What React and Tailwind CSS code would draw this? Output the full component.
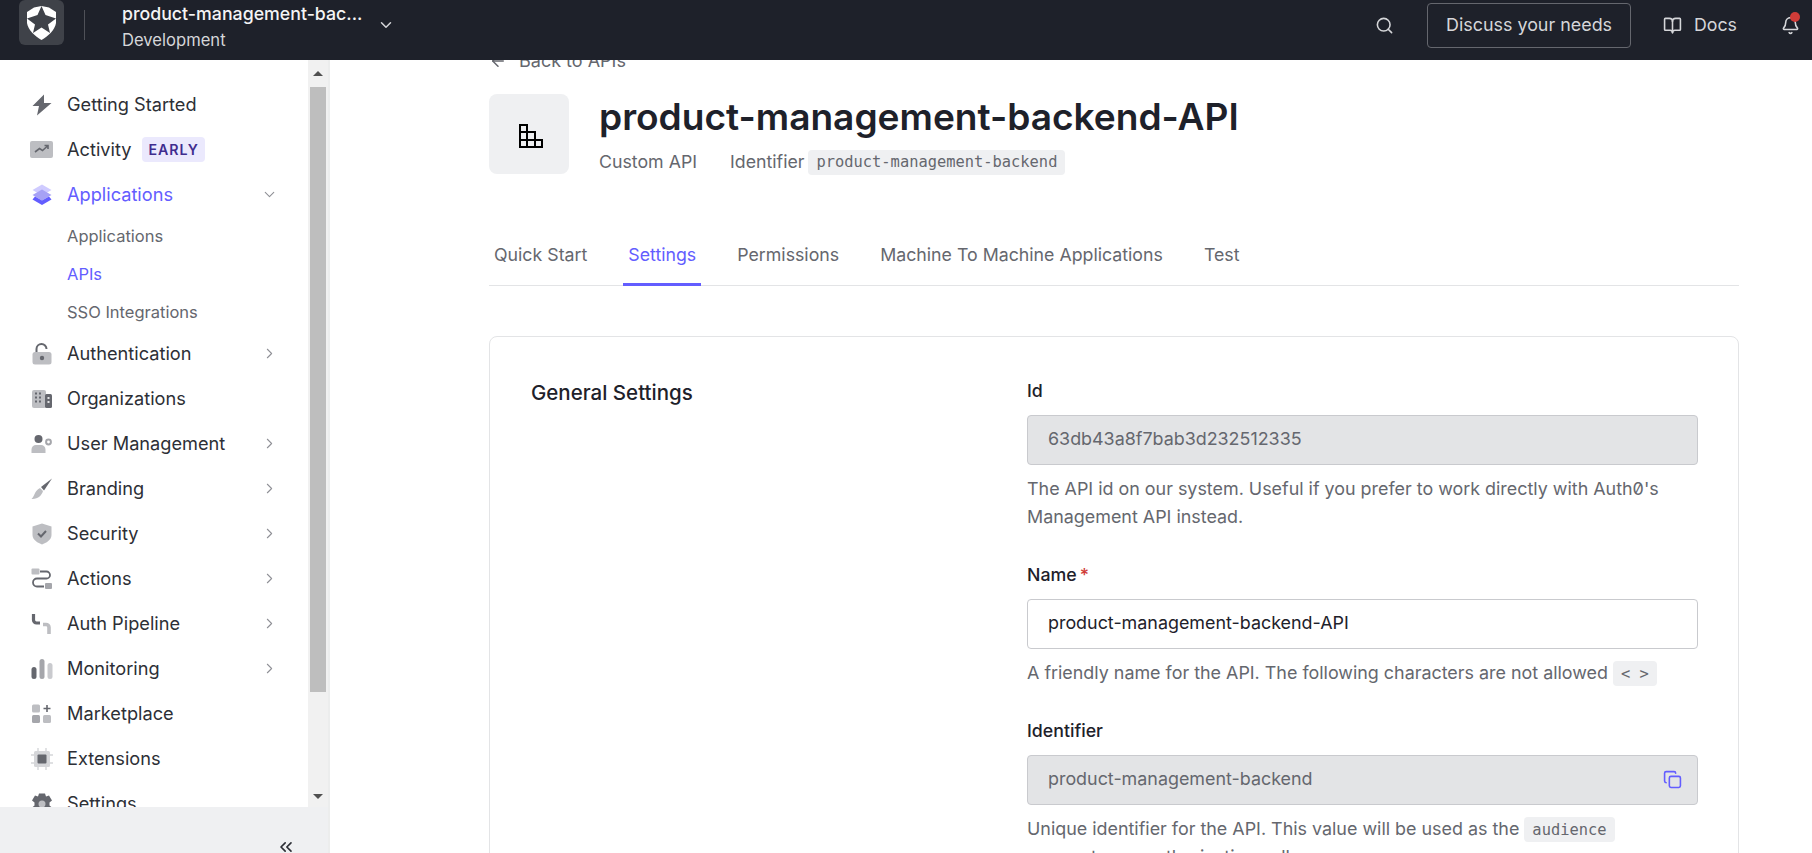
import React from 'react';
import { ChevronDown, ChevronRight, ChevronsLeft, Search, BookOpen, Bell, ArrowLeft, Copy } from 'lucide-react';

const Bolt = () => (
  <svg width="22" height="22" viewBox="0 0 22 22"><path d="M13 0.5 L1.5 12 H8 L6 21.5 L20.5 9 H13 Z" fill="#65676e" /></svg>
);
const Activity = () => (
  <svg width="24" height="20" viewBox="0 0 24 20">
    <rect y="1" width="23" height="17" rx="2" fill="#bdbec2" />
    <path d="M5 12 L9.5 8.5 L12.5 10.5 L17.5 6 M14.5 5.5 H18 V9" fill="none" stroke="#65676e" strokeWidth="1.6" />
  </svg>
);
const Layers = () => (
  <svg width="22" height="22" viewBox="0 0 22 22">
    <path d="M11 0.5 L20.5 6 L11 11.5 L1.5 6 Z" fill="#cfcbff" />
    <path d="M11 5.5 L20.5 11 L11 16.5 L1.5 11 Z" fill="#a6a1f5" />
    <path d="M4 12.5 L11 16.5 L18 12.5 L20.5 15.5 L11 21 L1.5 15.5 Z" fill="#635dff" />
  </svg>
);
const Lock = () => (
  <svg width="22" height="22" viewBox="0 0 22 22">
    <path d="M5.5 9 V6 a5 5 0 0 1 10 0" fill="none" stroke="#65676e" strokeWidth="2" />
    <rect x="1.5" y="9" width="19" height="12.5" rx="2.5" fill="#bdbec2" />
    <circle cx="11" cy="15" r="2.2" fill="#65676e" />
  </svg>
);
const Building = () => (
  <svg width="22" height="20" viewBox="0 0 22 20">
    <rect x="1" y="1" width="14" height="18" rx="2" fill="#bdbec2" />
    <rect x="14" y="5" width="7" height="14" rx="1.5" fill="#65676e" />
    <path d="M4 4.5 h2 M8 4.5 h2 M4 8.5 h2 M8 8.5 h2 M4 12.5 h2 M8 12.5 h2" stroke="#65676e" strokeWidth="2" />
    <path d="M16.5 9 h2 M16.5 13 h2" stroke="#e3e4e6" strokeWidth="2" />
  </svg>
);
const UserGear = () => (
  <svg width="22" height="20" viewBox="0 0 22 20">
    <circle cx="7.5" cy="5" r="4" fill="#65676e" />
    <path d="M0.5 19 v-3.5 a4.5 4.5 0 0 1 4.5 -4.5 h5 a4.5 4.5 0 0 1 4.5 4.5 v3.5 Z" fill="#bdbec2" />
    <circle cx="17.5" cy="8" r="2.4" fill="none" stroke="#a5a6ab" strokeWidth="2" />
  </svg>
);
const Brush = () => (
  <svg width="22" height="22" viewBox="0 0 22 22">
    <path d="M21 0.5 L10 9 L13 12.5 Z" fill="#65676e" />
    <path d="M9 10 L12 13 C11 17 7 21.5 0.5 21 C3.5 19 3 13 9 10 Z" fill="#bdbec2" />
  </svg>
);
const Shield = () => (
  <svg width="20" height="22" viewBox="0 0 20 22">
    <path d="M10 0.5 L19.5 3.5 V12 C19.5 17 14 20 10 21.5 C6 20 0.5 17 0.5 12 V3.5 Z" fill="#bdbec2" />
    <path d="M6 10.5 L9 13.5 L14 8" fill="none" stroke="#65676e" strokeWidth="2" />
  </svg>
);
const Flow = () => (
  <svg width="22" height="22" viewBox="0 0 22 22">
    <rect x="0.5" y="0.5" width="8" height="6" rx="1" fill="#bdbec2" />
    <rect x="14" y="15" width="7" height="6" rx="1" fill="#a5a6ab" />
    <path d="M9 3.5 H15.5 a3.5 3.5 0 0 1 0 7 H6 a3.5 3.5 0 0 0 0 8 H13" fill="none" stroke="#65676e" strokeWidth="1.8" />
  </svg>
);
const Pipe = () => (
  <svg width="22" height="22" viewBox="0 0 22 22">
    <path d="M2.5 1 V7 a3 3 0 0 0 3 3 H9" fill="none" stroke="#65676e" strokeWidth="3.2" />
    <path d="M12 11.5 H15 a3 3 0 0 1 3 3 V21" fill="none" stroke="#bdbec2" strokeWidth="3.6" />
  </svg>
);
const Bars = () => (
  <svg width="22" height="22" viewBox="0 0 22 22">
    <rect x="0.5" y="9" width="5" height="12" rx="2.5" fill="#65676e" />
    <rect x="8.5" y="1" width="5" height="20" rx="2.5" fill="#a5a6ab" />
    <rect x="16.5" y="5" width="5" height="16" rx="2.5" fill="#c9cace" />
  </svg>
);
const Market = () => (
  <svg width="22" height="20" viewBox="0 0 22 20">
    <rect x="1" y="0.5" width="8" height="8" rx="1.5" fill="#bdbec2" />
    <rect x="1" y="11" width="8" height="8" rx="1.5" fill="#a5a6ab" />
    <rect x="12" y="11" width="8" height="8" rx="1.5" fill="#bdbec2" />
    <path d="M16 1 v7 M12.5 4.5 h7" stroke="#65676e" strokeWidth="1.6" />
  </svg>
);
const Chip = () => (
  <svg width="22" height="22" viewBox="0 0 22 22">
    <rect x="3" y="3" width="16" height="16" rx="1.5" fill="#d5d6d9" />
    <path d="M7 0 v22 M15 0 v22 M0 7 h22 M0 15 h22" stroke="#d5d6d9" strokeWidth="1.4" />
    <rect x="6.5" y="6.5" width="9" height="9" rx="1" fill="#65676e" />
  </svg>
);
const Gear = () => (
  <svg width="22" height="22" viewBox="0 0 22 22">
    <path d="M8 0.5 h6 l1 3 3 -1 3 5 -2.5 2 v3 l2.5 2 -3 5 -3 -1 -1 3 h-6 l-1 -3 -3 1 -3 -5 2.5 -2 v-3 l-2.5 -2 3 -5 3 1 Z" fill="#65676e" />
    <circle cx="11" cy="11" r="3.5" fill="#bdbec2" />
  </svg>
);

const navItems = [
  { label: 'Getting Started', icon: Bolt },
  { label: 'Activity', icon: Activity, badge: 'EARLY' },
  { label: 'Applications', icon: Layers, open: true, active: true },
  { label: 'Authentication', icon: Lock, arrow: true },
  { label: 'Organizations', icon: Building },
  { label: 'User Management', icon: UserGear, arrow: true },
  { label: 'Branding', icon: Brush, arrow: true },
  { label: 'Security', icon: Shield, arrow: true },
  { label: 'Actions', icon: Flow, arrow: true },
  { label: 'Auth Pipeline', icon: Pipe, arrow: true },
  { label: 'Monitoring', icon: Bars, arrow: true },
  { label: 'Marketplace', icon: Market },
  { label: 'Extensions', icon: Chip },
  { label: 'Settings', icon: Gear },
];

const subItems = [
  { label: 'Applications' },
  { label: 'APIs', active: true },
  { label: 'SSO Integrations' },
];

const tabs = ['Quick Start', 'Settings', 'Permissions', 'Machine To Machine Applications', 'Test'];

function NavRow({ item }) {
  const Icon = item.icon;
  return (
    <div className="h-[45px] flex items-center pl-[30px] pr-[30px] shrink-0">
      <span className="w-[24px] flex justify-center shrink-0"><Icon /></span>
      <span className={`ml-[13px] text-[18.2px] whitespace-nowrap ${item.active ? 'text-[#635dff]' : 'text-[#2d2f36]'}`}>{item.label}</span>
      {item.badge && (
        <span className="ml-[11px] h-[25px] px-[6px] flex items-center rounded bg-[#ebe9fd] text-[#3f2d8f] text-[14.2px] font-semibold tracking-[1px]">{item.badge}</span>
      )}
      {item.open && <ChevronDown className="ml-auto text-[#8f9096]" size={17} strokeWidth={1.5} />}
      {item.arrow && <ChevronRight className="ml-auto text-[#8f9096]" size={17} strokeWidth={1.5} />}
    </div>
  );
}

function Sidebar() {
  return (
    <aside className="w-[330px] shrink-0 h-full flex flex-col border-r-2 border-[#eceded] bg-white">
      <div className="flex-1 min-h-0 flex">
        <div className="flex-1 overflow-hidden pt-[22px]">
          {navItems.slice(0, 3).map(item => <NavRow key={item.label} item={item} />)}
          <div>
            {subItems.map(sub => (
              <div key={sub.label} className={`h-[38px] flex items-center pl-[67px] text-[16.5px] ${sub.active ? 'text-[#635dff]' : 'text-[#65676e]'}`}>{sub.label}</div>
            ))}
          </div>
          {navItems.slice(3).map(item => <NavRow key={item.label} item={item} />)}
        </div>
        <div className="w-[20px] shrink-0 flex flex-col bg-[#f1f1f1]">
          <div className="h-[27px] flex items-center justify-center">
            <span className="w-0 h-0 border-x-[5px] border-x-transparent border-b-[5px] border-b-[#505050]" />
          </div>
          <div className="h-[605px] mx-[2px] bg-[#bebebe]" />
          <div className="flex-1 flex items-end justify-center pb-[8px]">
            <span className="w-0 h-0 border-x-[5px] border-x-transparent border-t-[5px] border-t-[#505050]" />
          </div>
        </div>
      </div>
      <div className="h-[46px] shrink-0 bg-[#eff0f2] flex items-end justify-end pr-[32px]">
        <ChevronsLeft className="text-[#2d2f36] -mb-[4px]" size={20} />
      </div>
    </aside>
  );
}

function Header() {
  return (
    <header className="h-[60px] shrink-0 bg-[#1e212a] flex items-center pl-[19px] pr-[10px] text-[#e3e4e6]">
      <div className="w-[45px] h-[45px] -mt-[15px] rounded-md bg-[#3f4249] flex items-center justify-center">
        <svg width="29" height="34" viewBox="0 0 29 34">
          <path d="M0 6 L7 1.5 L14.5 0 L22 1.5 L29 6 V17 C28 24 21 30 14.5 34 C8 30 1 24 0 17 Z" fill="#fff" />
          <path d="M14.5 0 L18.5 9 L29 12.5 L21 18.5 L23 27 L14.5 21.5 L6 27 L8 18.5 L0 12.5 L10.5 9 Z" fill="#3f4249" />
        </svg>
      </div>
      <div className="w-px h-[30px] bg-[#4f5158] ml-[20px] -mt-[10px]" />
      <div className="ml-[37px] -mt-[7px] w-[240px]">
        <div className="text-[#f4f4f5] text-[17.75px] font-medium leading-[26px] whitespace-nowrap">product-management-bac...</div>
        <div className="text-[#d5d6d9] text-[16.6px] leading-[26px]">Development</div>
      </div>
      <ChevronDown className="ml-[15px] -mt-[10px] text-[#d5d6d9]" size={18} />
      <Search className="ml-auto -mt-[10px] text-[#d5d6d9]" size={19} />
      <button className="ml-[33px] w-[204px] h-[45px] -mt-[10px] rounded border border-[#65676e] text-[17.9px] text-[#d5d6d9]">Discuss your needs</button>
      <BookOpen className="ml-[32px] -mt-[10px] text-[#d5d6d9]" size={19} />
      <span className="ml-[12px] -mt-[9px] text-[17.75px] text-[#d5d6d9]">Docs</span>
      <span className="relative ml-[44px] w-[20px] -mt-[10px] mr-[1px]">
        <Bell className="text-[#d5d6d9]" size={19} />
        <span className="absolute -top-[4px] left-[9px] w-[10px] h-[10px] rounded-full bg-[#d03c38]" />
      </span>
    </header>
  );
}

function Code({ children }) {
  return (
    <code className="inline-flex items-center h-[25px] px-[8px] rounded bg-[#eff0f2] text-[15.4px] text-[#65676e] font-['DejaVu_Sans_Mono',monospace] align-middle">{children}</code>
  );
}

function Field({ label, required, children, input, disabled, copy }) {
  return (
    <div className="mb-[32px]">
      <div className="text-[17.75px] font-[450] text-[#1e212a] leading-[24px] mb-[12px]">
        {label}{required && <span className="text-[#d03c38] ml-[3px]">*</span>}
      </div>
      <div className={`h-[50px] rounded border flex items-center px-[20px] text-[17.9px] ${disabled ? 'bg-[#e3e4e6] border-[#c9cace] text-[#65676e]' : 'bg-white border-[#c9cace] text-[#1e212a]'}`}>
        <span>{input}</span>
        {copy && <Copy className="ml-auto -mr-[5px] text-[#635dff]" size={19} />}
      </div>
      <p className="mt-[10px] text-[17.9px] leading-[28px] text-[#65676e]">{children}</p>
    </div>
  );
}

function Main() {
  return (
    <main className="flex-1 min-w-0 h-full overflow-hidden pl-[159px] pr-[73px]">
      <div className="-mt-[2px]">
        <div className="h-[14px] overflow-hidden">
          <div className="-mt-[11px] flex items-center text-[#65676e] text-[18px]">
            <ArrowLeft size={18} />
            <span className="ml-[12px]">Back to APIs</span>
          </div>
        </div>
        <div className="flex mt-[22px]">
          <div className="w-[80px] h-[80px] pl-[3px] pt-[3px] rounded-lg bg-[#eff0f2] flex items-center justify-center">
            <svg width="24" height="24" viewBox="0 0 24 24" fill="none" stroke="#000" strokeWidth="2">
              <path d="M1 1 H8 V8 H16 V16 H23 V23 H1 Z M1 8 H8 V23 M1 16 H16 V23" />
            </svg>
          </div>
          <div className="ml-[30px]">
            <h1 className="text-[37.1px] leading-[50px] font-semibold text-[#1e212a] -mt-[2px] whitespace-nowrap">product-management-backend-API</h1>
            <div className="flex items-center text-[17.75px] text-[#65676e] mt-[7px]">
              <span>Custom API</span>
              <span className="ml-[33px]">Identifier</span>
              <span className="ml-[4px] flex"><Code>product-management-backend</Code></span>
            </div>
          </div>
        </div>
        <nav className="mt-[49px] h-[61px] flex gap-[31px] border-b border-[#e3e4e6] text-[17.75px] text-[#65676e]">
          {tabs.map(tab => (
            <span key={tab} className={`px-[5px] h-[61px] pt-[3px] flex items-center border-b-[3px] ${tab === 'Settings' ? 'text-[#635dff] border-[#635dff]' : 'border-transparent'}`}>{tab}</span>
          ))}
        </nav>
        <section className="mt-[50px] rounded-lg border border-[#e3e4e6] pt-[42px] pl-[41px] pr-[40px] flex">
          <h2 className="w-[496px] shrink-0 pt-[2px] text-[20.5px] font-[450] text-[#1e212a] leading-[24px]">General Settings</h2>
          <div className="flex-1 min-w-0">
            <Field label="Id" input="63db43a8f7bab3d232512335" disabled>
              The API id on our system. Useful if you prefer to work directly with <span className="slashed-zero">Auth0</span>'s Management API instead.
            </Field>
            <Field label="Name" required input="product-management-backend-API">
              A friendly name for the API. The following characters are not allowed <Code>{'< >'}</Code>
            </Field>
            <Field label="Identifier" input="product-management-backend" disabled copy>
              Unique identifier for the API. This value will be used as the <Code>audience</Code> parameter on authorization calls.
            </Field>
          </div>
        </section>
      </div>
    </main>
  );
}

export default function App() {
  return (
    <div className="w-[1812px] h-[853px] overflow-hidden flex flex-col bg-white font-['Inter',sans-serif]">
      <Header />
      <div className="flex-1 min-h-0 flex">
        <Sidebar />
        <Main />
      </div>
    </div>
  );
}
